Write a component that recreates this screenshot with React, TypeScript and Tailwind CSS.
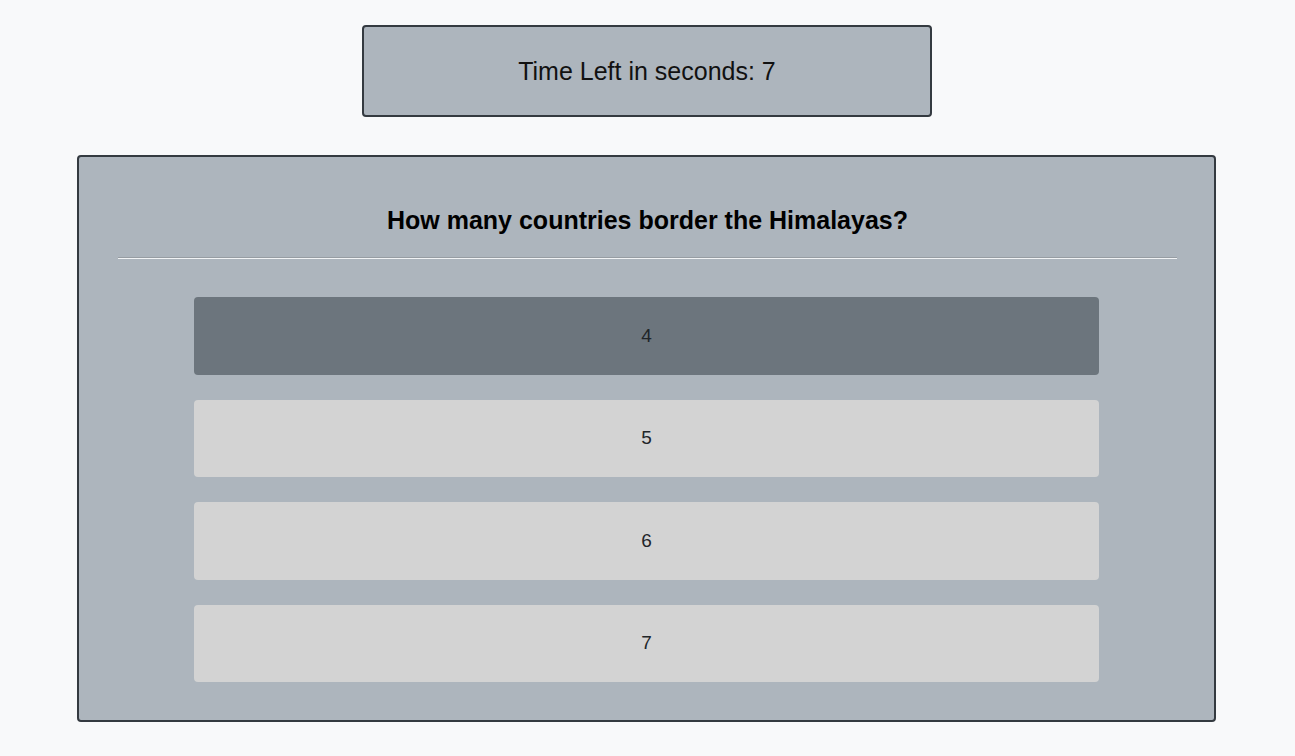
import React from "react";

export default function App() {
  const options = ["4", "5", "6", "7"];
  return (
    <div
      className="min-h-[756px] w-full bg-[#f8f9fa] pt-[25px]"
      style={{ fontFamily: '"Liberation Sans", Arial, sans-serif' }}
    >
      <div className="flex justify-center">
        <div className="ml-[-1px] flex h-[92px] w-[570px] items-center justify-center rounded-[4px] border-2 border-[#343a40] bg-[#adb5bd] pt-[2px] text-[25px] text-[#111]">
          Time Left in seconds: 7
        </div>
      </div>
      <div className="ml-[77px] mt-[38px] h-[567px] w-[1139px] rounded-[4px] border-2 border-[#343a40] bg-[#adb5bd] pl-[39px] pr-[37px] pt-[48px]">
        <h2 className="text-center text-[25px] font-bold leading-[30px] text-black">
          How many countries border the Himalayas?
        </h2>
        <div className="mt-[22px] h-[2px] border-t border-b border-t-[#979da3] border-b-[#f1f3f5]" />
        <div className="ml-[76px] mt-[38px] flex w-[905px] flex-col gap-[25px]">
          {options.map((o, i) => (
            <div
              key={o}
              className={`flex h-[77.6px] items-center justify-center rounded-[4px] text-[19px] text-[#212529] ${
                i === 0 ? "bg-[#6c757d]" : "bg-[#d3d3d3]"
              }`}
            >
              {o}
            </div>
          ))}
        </div>
      </div>
    </div>
  );
}
